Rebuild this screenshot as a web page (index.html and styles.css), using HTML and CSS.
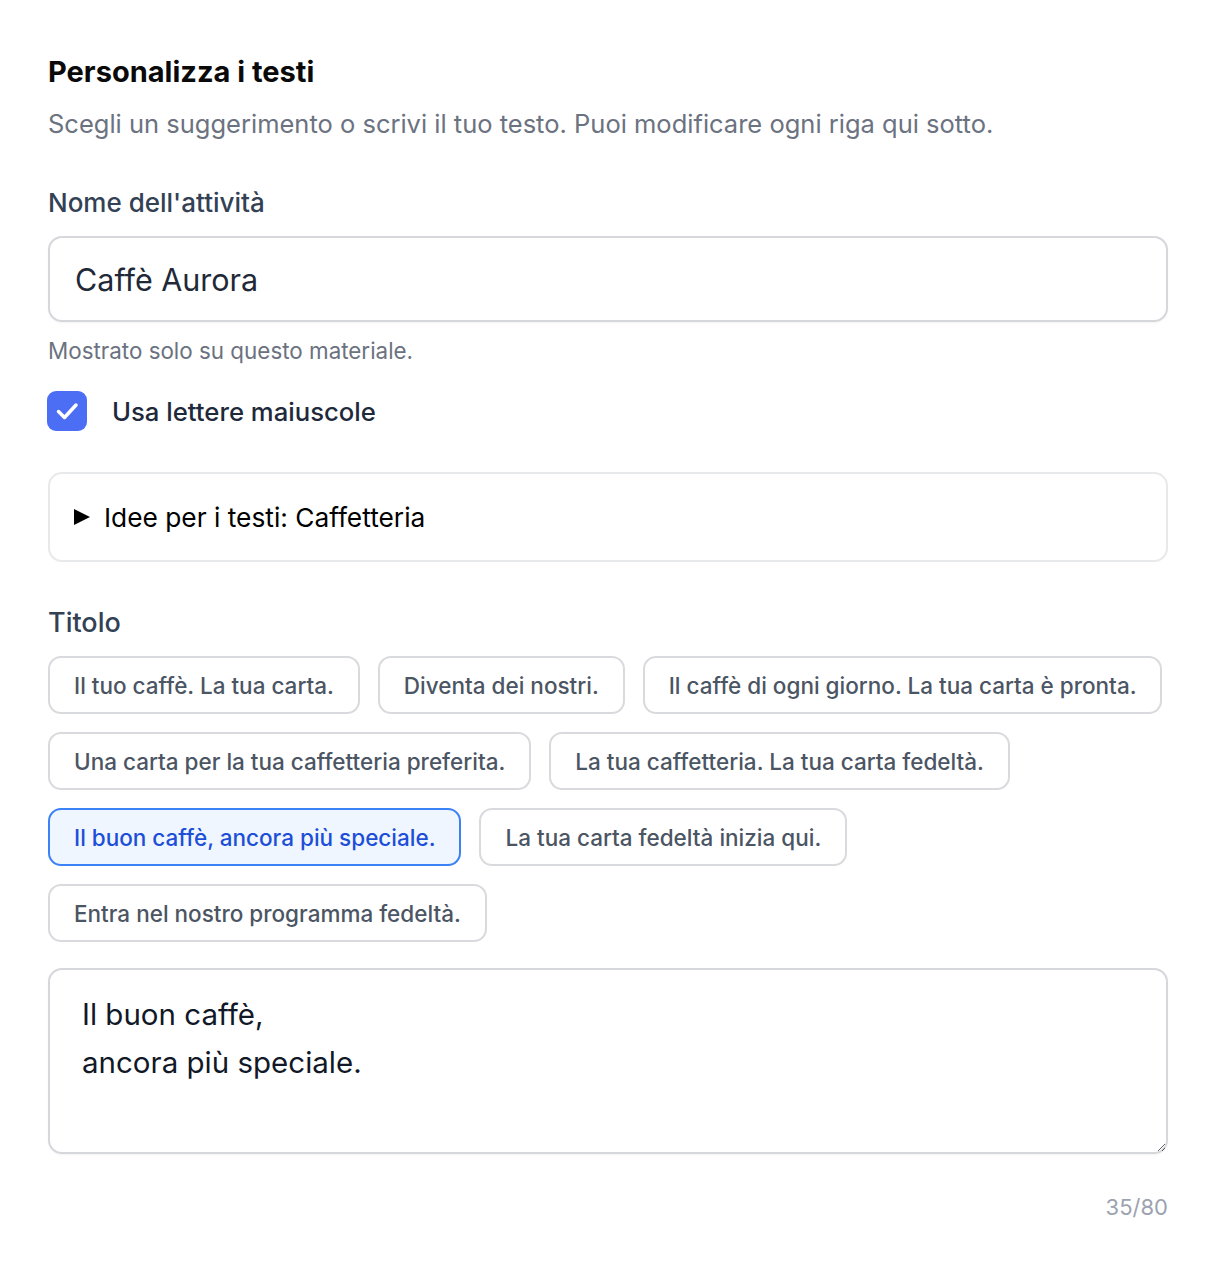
FILE: index.html
```html
<!DOCTYPE html>
<html lang="it">

<head>
  <meta charset="UTF-8">
  <meta name="viewport" content="width=device-width, initial-scale=1.0">
  <title>Personalizza i testi</title>
  <link rel="stylesheet" href="styles.css">
</head>

<body>
  <div class="container">
    <h1 class="title">Personalizza i testi</h1>
    <p class="subtitle">Scegli un suggerimento o scrivi il tuo testo. Puoi modificare ogni riga qui sotto.</p>

    <label class="label" for="business">Nome dell'attività</label>
    <input class="text-input" type="text" id="business" value="Caffè Aurora">
    <div class="help">Mostrato solo su questo materiale.</div>

    <label class="check-row">
      <span class="check-box">
        <svg width="40" height="40" viewBox="0 0 40 40" fill="none" stroke="#fff" stroke-width="3.5" stroke-linecap="round" stroke-linejoin="round">
          <path d="M11.5 20.5l6 6 11.5-12.5" />
        </svg>
      </span>
      <span class="check-label">Usa lettere maiuscole</span>
    </label>

    <details class="ideas">
      <summary><span class="caret"></span>Idee per i testi: Caffetteria</summary>
    </details>

    <div class="label label-title">Titolo</div>
    <div class="chips">
      <div class="chip">Il tuo caffè. La tua carta.</div>
      <div class="chip">Diventa dei nostri.</div>
      <div class="chip">Il caffè di ogni giorno. La tua carta è pronta.</div>
      <div class="chip">Una carta per la tua caffetteria preferita.</div>
      <div class="chip">La tua caffetteria. La tua carta fedeltà.</div>
      <div class="chip active">Il buon caffè, ancora più speciale.</div>
      <div class="chip">La tua carta fedeltà inizia qui.</div>
      <div class="chip">Entra nel nostro programma fedeltà.</div>
    </div>

    <textarea class="text-area" rows="3">Il buon caffè,
ancora più speciale.</textarea>
    <div class="counter">35/80</div>
  </div>
</body>

</html>
```
FILE: styles.css
```css
* {
  margin: 0;
  padding: 0;
  box-sizing: border-box;
}

body {
  font-family: Inter, "Noto Sans", sans-serif;
  background: #fff;
  color: #111827;
}

.container {
  padding: 54px 48px 40px 48px;
}

.title {
  font-size: 29px;
  line-height: 36px;
  font-weight: 700;
  color: #0a0a0a;
}

.subtitle {
  margin-top: 18px;
  font-size: 25.5px;
  line-height: 32px;
  color: #6b7280;
}

.label {
  display: block;
  margin-top: 48px;
  font-size: 26px;
  line-height: 30px;
  font-weight: 500;
  color: #334155;
}

.text-input {
  display: block;
  width: 100%;
  height: 86px;
  margin-top: 18px;
  padding: 0 25px;
  border: 2px solid #d6d7db;
  border-radius: 14px;
  box-shadow: 0 1px 2px rgb(0 0 0 / 0.05);
  font-family: inherit;
  font-size: 30.5px;
  color: #1f2937;
  outline: none;
}

.help {
  margin-top: 15px;
  font-size: 22.4px;
  line-height: 28px;
  color: #6b7280;
}

.check-row {
  display: flex;
  align-items: center;
  gap: 25px;
  margin-top: 26px;
  height: 40px;
}

.check-box {
  width: 40px;
  height: 40px;
  margin-left: -1px;
  border-radius: 9px;
  background-color: #4c6ef5;
  display: flex;
  align-items: center;
  justify-content: center;
}

.check-label {
  font-size: 25.7px;
  font-weight: 500;
  color: #1e293b;
}

.ideas {
  margin-top: 41px;
  border: 2px solid #e8e9eb;
  border-radius: 14px;
}

.ideas summary {
  list-style: none;
  display: flex;
  align-items: center;
  height: 86px;
  padding-left: 24px;
  font-size: 26.3px;
  color: #000;
  cursor: pointer;
}

.ideas summary::-webkit-details-marker {
  display: none;
}

.caret {
  width: 0;
  height: 0;
  margin-right: 14px;
  border-top: 8px solid transparent;
  border-bottom: 8px solid transparent;
  border-left: 16px solid #000;
}

.label-title {
  margin-top: 46px;
  font-size: 27px;
}

.chips {
  display: flex;
  flex-wrap: wrap;
  gap: 18px;
  margin-top: 18px;
}

.chip {
  height: 58px;
  padding: 0 24px;
  border: 2px solid #d9dadd;
  border-radius: 13px;
  display: flex;
  align-items: center;
  font-size: 22.5px;
  font-weight: 500;
  color: #4b5563;
  background: #fff;
  cursor: pointer;
}

.chip.active {
  border-color: #3b82f6;
  background-color: #eff6ff;
  color: #1d4ed8;
}

.text-area {
  display: block;
  width: 100%;
  height: 186px;
  margin-top: 26px;
  padding: 20px 32px;
  border: 2px solid #d6d7db;
  border-radius: 14px;
  box-shadow: 0 1px 2px rgb(0 0 0 / 0.05);
  font-family: inherit;
  font-size: 29.5px;
  line-height: 48px;
  color: #111827;
  outline: none;
  resize: vertical;
}

.counter {
  margin-top: 39px;
  text-align: right;
  font-size: 22px;
  line-height: 28px;
  color: #9ca3af;
}
```
